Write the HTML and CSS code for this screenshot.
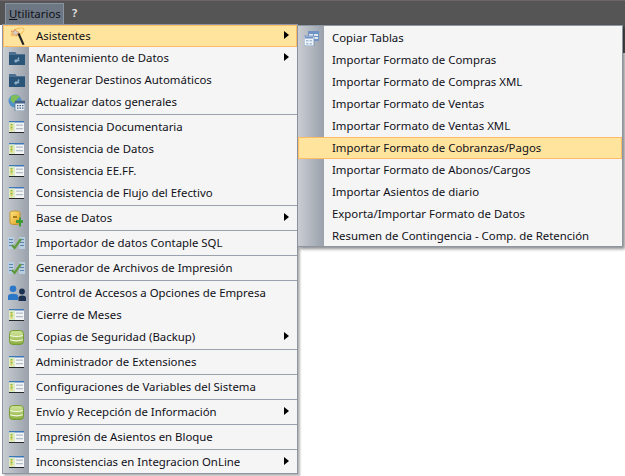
FILE: index.html
```html
<!DOCTYPE html>
<html lang="es">
<head>
<meta charset="utf-8">
<title>Utilitarios</title>
<link rel="stylesheet" href="styles.css">
</head>
<body>
<svg class="defs" width="0" height="0" aria-hidden="true">
  <defs>
    <linearGradient id="gGreen" x1="0" y1="0" x2="0" y2="1"><stop offset="0" stop-color="#d5e6a0"/><stop offset="1" stop-color="#8db040"/></linearGradient>
    <linearGradient id="gGold" x1="0" y1="0" x2="1" y2="1"><stop offset="0" stop-color="#ffe680"/><stop offset="1" stop-color="#e0a020"/></linearGradient>
    <symbol id="i-wand" viewBox="0 0 18 18">
      <ellipse cx="9.500" cy="5" rx="7" ry="3" transform="rotate(-25 9.500 5)" fill="none" stroke="#f6bf55" stroke-width="1.100"/>
      <path d="M3 4l3 .5 1-2.500 1.500 2.500 2.500.5-2 2-.5 2-2-1.500-2 .5.5-2.500z" fill="#d8cfc4" stroke="#d9703c" stroke-width=".5"/>
      <path d="M9.500 7l2-1 5 11.500-2 .5z" fill="#222"/>
    </symbol>
    <symbol id="i-folder" viewBox="0 0 16 14">
      <path d="M0 1h6l1.500 2H16v11H0z" fill="#2a5578"/>
      <path d="M0 1h6l1.500 2H16v1H0z" fill="#4a6f90"/>
      <path d="M5 10l2-2 1 1 1.500-3 1 1-1 2 1.500 1-3 .5-1 1.500z" fill="#8fb0c8"/>
    </symbol>
    <symbol id="i-globe" viewBox="0 0 17 17">
      <circle cx="7" cy="7" r="6.500" fill="#4f93c9"/>
      <path d="M3 2.500C6 0 10 1 12 3L9 5 8 8 5 9 2.500 6z" fill="#7fbf55"/>
      <path d="M7 7h10v10H7z" fill="#e8eef6" stroke="#5b7696" stroke-width=".8"/>
      <path d="M7 7h10v2.500H7z" fill="#44628a"/>
      <path d="M9 11h1.500v1.200H9zM11.500 11H13v1.200h-1.500zM14 11h1.500v1.200H14zM9 13.500h1.500v1.200H9zM11.500 13.500H13v1.200h-1.500zM14 13.500h1.500v1.200H14z" fill="#45607f"/>
    </symbol>
    <symbol id="i-form" viewBox="0 0 15 12">
      <path d="M0 0h15v12H0z" fill="#f2f4f6"/>
      <path d="M0 0h15v1.500H0z" fill="#3d78b8"/>
      <path d="M0 11h15v1H0z" fill="#26282c"/>
      <path d="M0 1.500h6v9.500H0z" fill="#dcecc0"/>
      <path d="M1.500 3h2v1.500h-2zM1.500 6h2v1.500h-2z" fill="#8ab84a"/>
      <path d="M1.500 4.500h2V6h-2zM1.500 7.800h2v1.500h-2z" fill="#e6c84a"/>
      <path d="M7 3.500h7v1.200H7zM7 7h7v1.200H7z" fill="#b5bdc7"/>
    </symbol>
    <symbol id="i-dbadd" viewBox="0 0 15 17">
      <path d="M1 2.500C1 .5 11 .5 11 2.500V13C11 15 1 15 1 13z" fill="url(#gGold)" stroke="#b88a20" stroke-width=".8"/>
      <path d="M4 6h4v2H4z" fill="#a87a18"/>
      <path d="M8 9h3V6.500h2V9h2v3h-2v3.500h-2V12H8z" fill="#3f9a38" transform="translate(-1 1)"/>
    </symbol>
    <symbol id="i-import" viewBox="0 0 17 14">
      <path d="M0 1h6v12H0zM11 1h6v12h-6z" fill="#b8cde0"/>
      <path d="M1 3h4v1H1zM1 6h4v1H1zM1 9h4v1H1zM12 3h4v1h-4zM12 6h4v1h-4zM12 9h4v1h-4z" fill="#5d86ad"/>
      <path d="M4 9l2.500 3L13 3" fill="none" stroke="#5f9a3c" stroke-width="2.300"/>
    </symbol>
    <symbol id="i-users" viewBox="0 0 18 17">
      <circle cx="5" cy="3.800" r="3.300" fill="#2b78c8"/>
      <path d="M0 15V11C0 8 10 8 10 11v4z" fill="#2b78c8"/>
      <circle cx="14" cy="6.500" r="2.900" fill="#1c3050"/>
      <path d="M10.500 16v-3.500C10.500 9.800 18 9.800 18 12.500V16z" fill="#1c3050"/>
    </symbol>
    <symbol id="i-db" viewBox="0 0 15 15">
      <rect x=".6" y=".6" width="13.800" height="13.800" rx="3" fill="url(#gGreen)" stroke="#6f9a2c" stroke-width="1"/>
      <path d="M1 5.500q6.500 2 13 0M1 9.800q6.500 2 13 0" fill="none" stroke="#f4f8e4" stroke-width="1.200"/>
    </symbol>
    <symbol id="i-tables" viewBox="0 0 15 15">
      <path d="M4 0h11v10H4z" fill="#6f93c4"/>
      <path d="M5 3h4v2H5zM10 3h4v2h-4zM5 6h4v2H5zM10 6h4v2h-4z" fill="#dfe9f5"/>
      <path d="M0 5h10v10H0z" fill="#f0f4f9" stroke="#6f8db5" stroke-width=".8"/>
      <path d="M1 5.500h8v2H1z" fill="#6f93c4"/>
      <path d="M2 9h2.500v1.500H2zM5.500 9H8v1.500H5.500zM2 12h2.500v1.500H2zM5.500 12H8v1.500H5.500z" fill="#a8bdd8"/>
    </symbol>
  </defs>
</svg>

<nav class="menubar">
  <div class="top-item top-item--open"><u>U</u>tilitarios</div>
  <div class="top-item">?</div>
</nav>
<div class="edge"></div>

<div class="menu menu--main">
  <div class="row row--active"><span class="ico"><svg class="s-wand"><use href="#i-wand"/></svg></span><span class="label">Asistentes</span><i class="arrow"></i></div>
  <div class="row"><span class="ico"><svg class="s-folder"><use href="#i-folder"/></svg></span><span class="label">Mantenimiento de Datos</span><i class="arrow"></i></div>
  <div class="row"><span class="ico"><svg class="s-folder"><use href="#i-folder"/></svg></span><span class="label">Regenerar Destinos Automáticos</span></div>
  <div class="row"><span class="ico"><svg class="s-globe"><use href="#i-globe"/></svg></span><span class="label">Actualizar datos generales</span></div>
  <div class="sep"></div>
  <div class="row"><span class="ico"><svg class="s-form"><use href="#i-form"/></svg></span><span class="label">Consistencia Documentaria</span></div>
  <div class="row"><span class="ico"><svg class="s-form"><use href="#i-form"/></svg></span><span class="label">Consistencia de Datos</span></div>
  <div class="row"><span class="ico"><svg class="s-form"><use href="#i-form"/></svg></span><span class="label">Consistencia EE.FF.</span></div>
  <div class="row"><span class="ico"><svg class="s-form"><use href="#i-form"/></svg></span><span class="label">Consistencia de Flujo del Efectivo</span></div>
  <div class="sep"></div>
  <div class="row"><span class="ico"><svg class="s-dbadd"><use href="#i-dbadd"/></svg></span><span class="label">Base de Datos</span><i class="arrow"></i></div>
  <div class="sep"></div>
  <div class="row"><span class="ico"><svg class="s-import"><use href="#i-import"/></svg></span><span class="label">Importador de datos Contaple SQL</span></div>
  <div class="sep"></div>
  <div class="row"><span class="ico"><svg class="s-import"><use href="#i-import"/></svg></span><span class="label">Generador de Archivos de Impresión</span></div>
  <div class="sep"></div>
  <div class="row"><span class="ico"><svg class="s-users"><use href="#i-users"/></svg></span><span class="label">Control de Accesos a Opciones de Empresa</span></div>
  <div class="row"><span class="ico"><svg class="s-form"><use href="#i-form"/></svg></span><span class="label">Cierre de Meses</span></div>
  <div class="row"><span class="ico"><svg class="s-db"><use href="#i-db"/></svg></span><span class="label">Copias de Seguridad (Backup)</span><i class="arrow"></i></div>
  <div class="sep"></div>
  <div class="row"><span class="ico"><svg class="s-form"><use href="#i-form"/></svg></span><span class="label">Administrador de Extensiones</span></div>
  <div class="sep"></div>
  <div class="row"><span class="ico"><svg class="s-form"><use href="#i-form"/></svg></span><span class="label">Configuraciones de Variables del Sistema</span></div>
  <div class="sep"></div>
  <div class="row"><span class="ico"><svg class="s-db"><use href="#i-db"/></svg></span><span class="label">Envío y Recepción de Información</span><i class="arrow"></i></div>
  <div class="sep"></div>
  <div class="row"><span class="ico"><svg class="s-form"><use href="#i-form"/></svg></span><span class="label">Impresión de Asientos en Bloque</span></div>
  <div class="sep"></div>
  <div class="row"><span class="ico"><svg class="s-form"><use href="#i-form"/></svg></span><span class="label">Inconsistencias en Integracion OnLine</span><i class="arrow"></i></div>
</div>

<div class="menu menu--sub">
  <div class="row"><span class="ico"><svg class="s-tables"><use href="#i-tables"/></svg></span><span class="label">Copiar Tablas</span></div>
  <div class="row"><span class="ico"></span><span class="label">Importar Formato de Compras</span></div>
  <div class="row"><span class="ico"></span><span class="label">Importar Formato de Compras XML</span></div>
  <div class="row"><span class="ico"></span><span class="label">Importar Formato de Ventas</span></div>
  <div class="row"><span class="ico"></span><span class="label">Importar Formato de Ventas XML</span></div>
  <div class="row row--active"><span class="ico"></span><span class="label">Importar Formato de Cobranzas/Pagos</span></div>
  <div class="row"><span class="ico"></span><span class="label">Importar Formato de Abonos/Cargos</span></div>
  <div class="row"><span class="ico"></span><span class="label">Importar Asientos de diario</span></div>
  <div class="row"><span class="ico"></span><span class="label">Exporta/Importar Formato de Datos</span></div>
  <div class="row"><span class="ico"></span><span class="label">Resumen de Contingencia - Comp. de Retención</span></div>
</div>
</body>
</html>
```
FILE: styles.css
```css
* { box-sizing: border-box; }
html, body { margin: 0; padding: 0; height: 100%; }
body {
  background: #fff;
  font-family: "Noto Sans", "Open Sans", sans-serif;
  font-size: 11.4px;
  color: #101018;
  overflow: hidden;
  position: relative;
}
.defs { position: absolute; }

.menubar {
  display: flex;
  height: 25px;
  padding: 2px 0 0 5px;
  background: #555555;
  border-top: 1px solid #6e6468;
}
.top-item {
  height: 22px;
  line-height: 20px;
  padding: 0 4px;
  margin-right: 1px;
  color: #e4e4e4;
  width: 24px;
  font-weight: 600;
}
.top-item--open {
  width: 59px;
  padding: 0 3px;
  margin-right: 4px;
  background: #6d7783;
  color: #101018;
  font-weight: 400;
  border: 1px solid #8a94a0;
  border-bottom: 0;
}

.edge {
  position: absolute;
  top: 25px;
  right: 0;
  width: 2px;
  height: 28px;
  background: #555555;
}

.menu {
  position: absolute;
  display: flex;
  flex-direction: column;
  background: linear-gradient(90deg, #c9cdd2 0, #9aa1ab 26px, #f5f5f5 26px);
  border: 1px solid #8d96a3;
}
.menu--main {
  left: 2px;
  top: 24px;
  width: 296px;
  height: 450px;
  box-shadow: 2px 2px 2px rgba(0, 0, 0, .3);
  z-index: 1;
}
.menu--sub {
  left: 298px;
  top: 25px;
  width: 325px;
  height: 222px;
  border-left: 0;
  padding-top: 1px;
  box-shadow: 2px 2px 3px rgba(0, 0, 0, .45);
  z-index: 2;
}

.row {
  flex: none;
  display: flex;
  align-items: center;
  height: 22px;
  border: 1px solid transparent;
  position: relative;
}
.row--active {
  background: #ffe49e;
  border-color: #ffbb66;
}
.ico {
  flex: none;
  width: 25px;
  height: 20px;
  display: flex;
  align-items: center;
  justify-content: center;
}
.label {
  margin-left: 7px;
  white-space: nowrap;
  line-height: 20px;
}
.menu--sub .label { margin-left: 8px; }
.arrow {
  position: absolute;
  right: 7px;
  top: 5px;
  border-left: 5px solid #000;
  border-top: 4px solid transparent;
  border-bottom: 4px solid transparent;
}
.sep {
  flex: none;
  height: 3px;
  margin-left: 33px;
  background: linear-gradient(#f5f5f5 1px, #9aa3ad 1px, #9aa3ad 2px, #f5f5f5 2px);
}

.s-wand { width: 18px; height: 18px; }
.s-folder { width: 16px; height: 14px; }
.s-globe { width: 17px; height: 17px; }
.s-form { width: 15px; height: 12px; }
.s-dbadd { width: 15px; height: 17px; }
.s-import { width: 17px; height: 14px; }
.s-users { width: 18px; height: 17px; }
.s-db { width: 15px; height: 15px; }
.s-tables { width: 15px; height: 15px; }
```
